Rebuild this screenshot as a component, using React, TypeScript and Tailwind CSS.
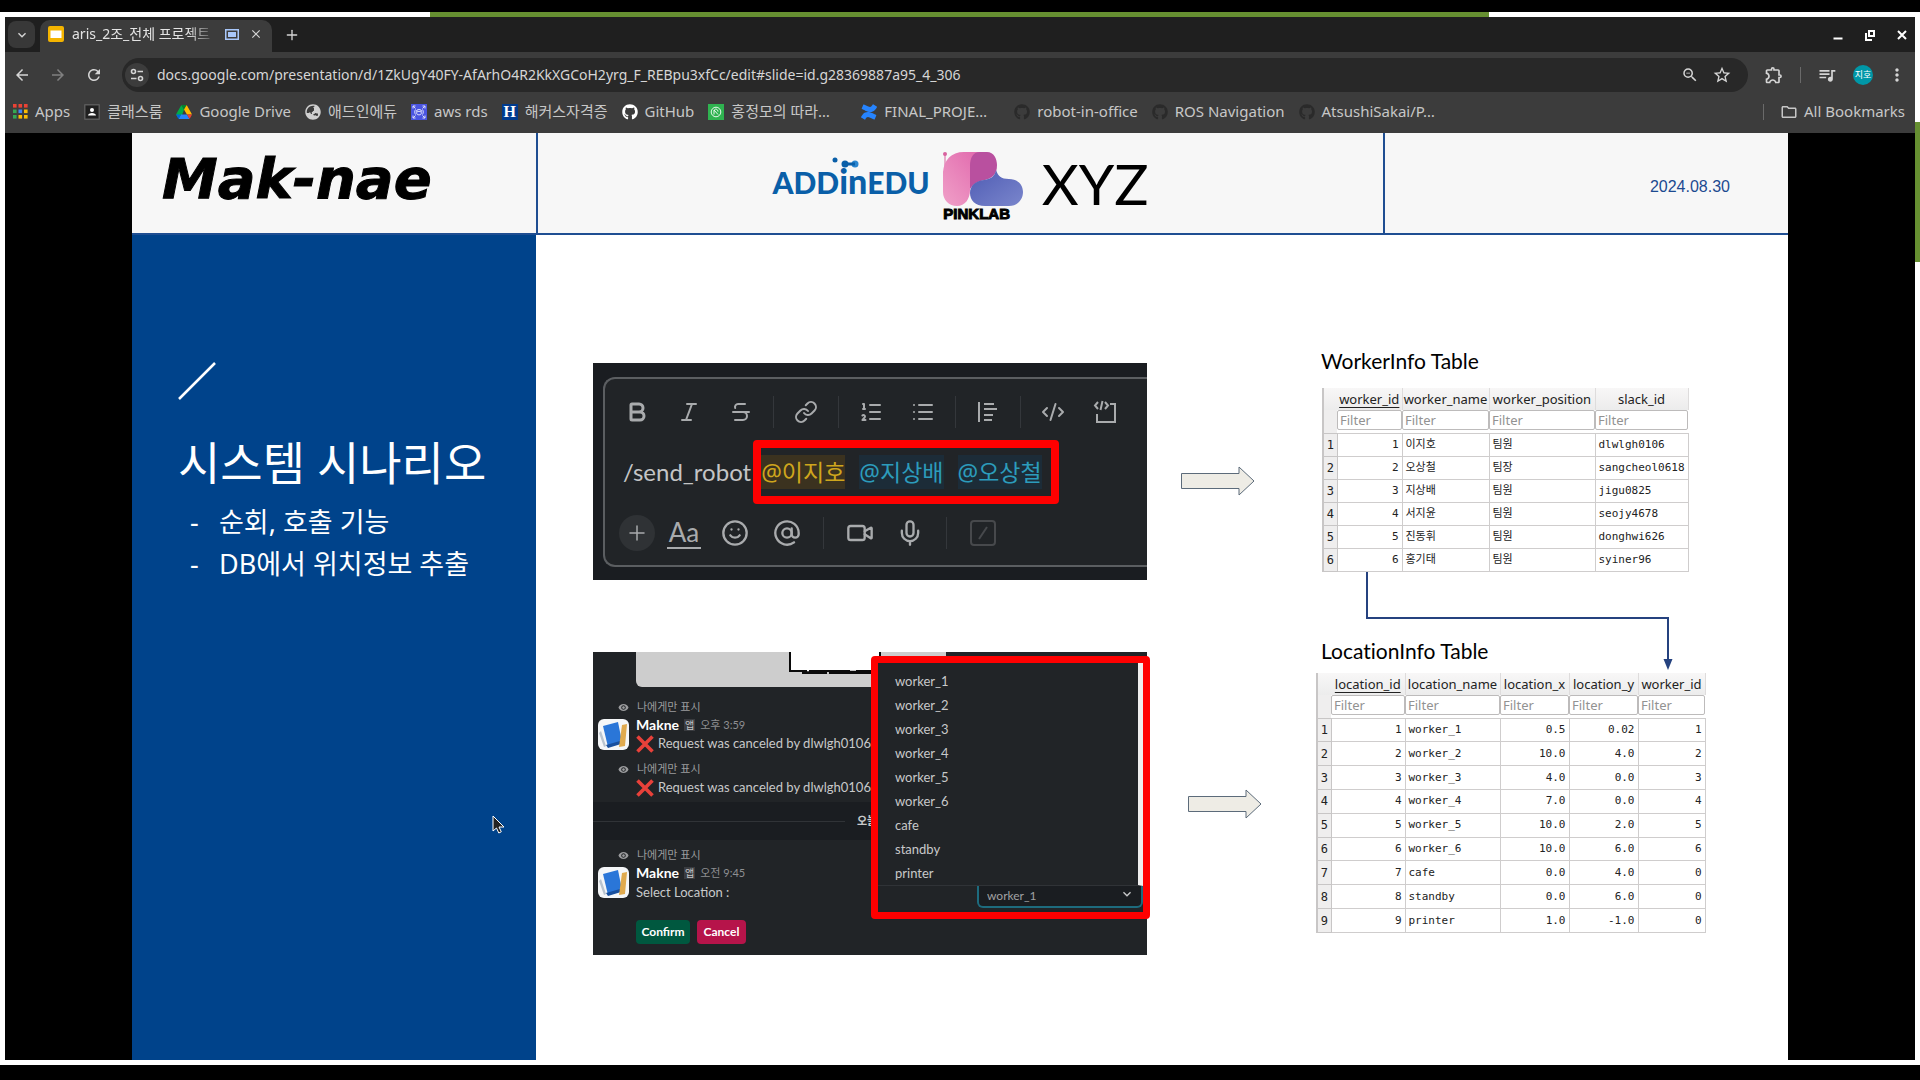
import type { ReactNode } from "react";
import { FaConfluence, FaGithub, FaGlobeAsia } from "react-icons/fa";
import {
  MdArrowBack,
  MdArrowForward,
  MdClose,
  MdExpandMore,
  MdMoreVert,
  MdOutlineExtension,
  MdOutlineFolder,
  MdQueueMusic,
  MdRefresh,
  MdStarBorder,
  MdVisibility,
  MdZoomOut,
} from "react-icons/md";
import { AtSign, Bold, CodeXml, Italic, Link, List, ListOrdered, Mic, Plus, Smile, Strikethrough, Video } from "lucide-react";

const workers = [
  ["1", "이지호", "팀원", "dlwlgh0106"],
  ["2", "오상철", "팀장", "sangcheol0618"],
  ["3", "지상배", "팀원", "jigu0825"],
  ["4", "서지윤", "팀원", "seojy4678"],
  ["5", "진동휘", "팀원", "donghwi626"],
  ["6", "홍기태", "팀원", "syiner96"],
];

const locations = [
  ["1", "worker_1", "0.5", "0.02", "1"],
  ["2", "worker_2", "10.0", "4.0", "2"],
  ["3", "worker_3", "4.0", "0.0", "3"],
  ["4", "worker_4", "7.0", "0.0", "4"],
  ["5", "worker_5", "10.0", "2.0", "5"],
  ["6", "worker_6", "10.0", "6.0", "6"],
  ["7", "cafe", "0.0", "4.0", "0"],
  ["8", "standby", "0.0", "6.0", "0"],
  ["9", "printer", "1.0", "-1.0", "0"],
];

function SlidesIcon() {
  return (
    <svg viewBox="0 0 16 16" className="h-4 w-4 shrink-0">
      <rect width="16" height="16" rx="2" fill="#f4b400" />
      <rect x="2.5" y="4.5" width="11" height="7.5" fill="#fff" />
    </svg>
  );
}

function AppsIcon() {
  const colors = ["#ea4335", "#ea4335", "#ea4335", "#34a853", "#4285f4", "#fbbc04", "#34a853", "#fbbc04", "#fbbc04"];
  return (
    <svg viewBox="0 0 15 15" className="h-[15px] w-[15px]">
      {colors.map((c, i) => (
        <rect key={i} x={(i % 3) * 5.5} y={Math.floor(i / 3) * 5.5} width="3.6" height="3.6" fill={c} />
      ))}
    </svg>
  );
}

function ClassroomIcon() {
  return (
    <svg viewBox="0 0 16 16" className="h-4 w-4">
      <rect width="16" height="16" rx="1" fill="#5a5a5a" />
      <rect x="1.5" y="1.5" width="13" height="13" fill="#202020" />
      <circle cx="8" cy="6" r="2" fill="#fff" />
      <path d="M4 11.5c0-3.4 8-3.4 8 0z" fill="#fff" />
    </svg>
  );
}

function DriveIcon() {
  return (
    <svg viewBox="0 0 87 78" className="h-[14px] w-4">
      <path d="M6.6 66.85 25.3 77 43.65 25 29.9 1.2C28.55 2 27.4 3.1 26.6 4.5L1.2 48.5A9 9 0 0 0 0 53z" fill="#00ac47" />
      <path d="M43.65 25 57.4 1.2C56 .4 54.5 0 52.9 0H34.4c-1.6 0-3.2.45-4.5 1.2z" fill="#00832d" />
      <path d="M43.65 25 57.4 1.2a9 9 0 0 1 3.3 3.3L86.1 48.5a9 9 0 0 1 1.2 4.5H59.8z" fill="#ffba00" />
      <path d="M59.8 53H27.5L13.75 76.8c1.35.8 2.9 1.2 4.5 1.2h50.8c1.6 0 3.15-.45 4.5-1.2z" fill="#2684fc" />
      <path d="M73.55 76.8c1.35-.8 2.5-1.9 3.3-3.3L86.1 57.5a9 9 0 0 0 1.2-4.5H59.8z" fill="#ea4335" />
      <path d="M0 53c0 1.55.4 3.1 1.2 4.5l9.25 16c.8 1.4 1.95 2.5 3.3 3.3L27.5 53z" fill="#0066da" />
    </svg>
  );
}

function RdsIcon() {
  return (
    <svg viewBox="0 0 16 16" className="h-4 w-4" fill="none" stroke="#fff">
      <rect width="16" height="16" fill="#4a55e0" stroke="none" />
      <path d="M2 4.5V2h2.5M11.5 2H14v2.5M14 11.5V14h-2.5M4.5 14H2v-2.5M2.5 2.5l2 2M13.5 2.5l-2 2M2.5 13.5l2-2M13.5 13.5l-2-2" strokeWidth=".8" />
      <ellipse cx="8" cy="6.5" rx="2.2" ry="1" strokeWidth=".8" />
      <path d="M5.8 6.5v3.4c0 1.3 4.4 1.3 4.4 0V6.5M4.5 5.5c-1 1.5-1 3.5 0 5M11.5 5.5c1 1.5 1 3.5 0 5" strokeWidth=".8" />
    </svg>
  );
}

function HackersIcon() {
  return (
    <span className="flex h-4 w-4 items-center justify-center bg-[#003b8e] font-['Liberation_Serif',serif] text-base leading-4 font-bold text-white">
      H
    </span>
  );
}

function GreenIcon() {
  return (
    <svg viewBox="0 0 16 16" className="h-4 w-4" fill="none" stroke="#fff">
      <rect width="16" height="16" fill="#2fb350" stroke="none" />
      <circle cx="8" cy="8" r="4.8" strokeWidth=".9" />
      <path d="M6 10.5V6l4 4.5M6.5 5.5c1.5-1 3.5 0 3.5 2" strokeWidth=".9" />
    </svg>
  );
}

function TuneIcon() {
  return (
    <svg viewBox="0 0 14 14" className="h-[14px] w-[14px]" fill="none" stroke="#d5d5d5" strokeWidth="1.6">
      <circle cx="3.5" cy="3.5" r="2" />
      <path d="M7.5 3.5H13M1 10.5h5.5" />
      <circle cx="10.5" cy="10.5" r="2" />
    </svg>
  );
}

const darkGithub = <FaGithub className="h-4 w-4 text-[#2a2a2a]" />;

const bookmarks: { label: string; icon: ReactNode }[] = [
  { label: "Apps", icon: <AppsIcon /> },
  { label: "클래스룸", icon: <ClassroomIcon /> },
  { label: "Google Drive", icon: <DriveIcon /> },
  { label: "애드인에듀", icon: <FaGlobeAsia className="h-4 w-4 text-[#d0d0d0]" /> },
  { label: "aws rds", icon: <RdsIcon /> },
  { label: "해커스자격증", icon: <HackersIcon /> },
  { label: "GitHub", icon: <FaGithub className="h-4 w-4 text-white" /> },
  { label: "홍정모의 따라…", icon: <GreenIcon /> },
  { label: "FINAL_PROJE…", icon: <FaConfluence className="h-4 w-4 text-[#2684ff]" /> },
  { label: "robot-in-office", icon: darkGithub },
  { label: "ROS Navigation", icon: darkGithub },
  { label: "AtsushiSakai/P…", icon: darkGithub },
];

function TabStrip() {
  return (
    <div className="flex h-[35px] shrink-0 items-center bg-[#1f1f1f] pl-[3px]">
      <button aria-label="Search tabs" className="flex h-[27px] w-[27px] items-center justify-center rounded-lg bg-[#383838]">
        <MdExpandMore className="h-4 w-4" />
      </button>
      <div className="mt-[3px] ml-[5px] flex h-8 w-[232px] items-center rounded-t-[10px] bg-[#3c3c3c] pb-1 pl-2">
        <SlidesIcon />
        <span className="ml-2 w-[145px] mask-r-from-80% text-sm whitespace-nowrap text-[#e3e3e3]">
          aris_2조_전체 프로젝트
        </span>
        <svg viewBox="0 0 14 11" className="ml-2 h-[11px] w-[14px]">
          <rect x=".75" y=".75" width="12.5" height="9.5" fill="none" stroke="#a8c7fa" strokeWidth="1.5" />
          <rect x="3" y="3" width="8" height="5" fill="#a8c7fa" />
        </svg>
        <button aria-label="Close tab" className="ml-[10px]">
          <MdClose className="h-[14px] w-[14px]" />
        </button>
      </div>
      <button aria-label="New tab" className="ml-3">
        <Plus className="h-4 w-4" />
      </button>
      <div className="ml-auto flex items-center gap-5 pr-[7px] text-white">
        <button aria-label="Minimize">
          <svg viewBox="0 0 12 12" className="h-3 w-3">
            <path d="M1.5 9.5h9" stroke="currentColor" strokeWidth="2" />
          </svg>
        </button>
        <button aria-label="Restore">
          <svg viewBox="0 0 12 12" className="h-3 w-3" fill="none" stroke="currentColor" strokeWidth="2">
            <path d="M5 2h5v5H5zM2 4v7h6" />
          </svg>
        </button>
        <button aria-label="Close">
          <svg viewBox="0 0 12 12" className="h-3 w-3" stroke="currentColor" strokeWidth="2">
            <path d="m2 2 8 8M10 2l-8 8" />
          </svg>
        </button>
      </div>
    </div>
  );
}

function Toolbar() {
  return (
    <div className="flex h-[46px] shrink-0 items-center bg-[#3c3c3c]">
      <div className="flex w-[117px] items-center gap-[18px] pl-2">
        <button aria-label="Back">
          <MdArrowBack className="h-[18px] w-[18px]" />
        </button>
        <button aria-label="Forward" className="text-[#808080]">
          <MdArrowForward className="h-[18px] w-[18px]" />
        </button>
        <button aria-label="Reload">
          <MdRefresh className="h-[18px] w-[18px]" />
        </button>
      </div>
      <div className="flex h-[34px] flex-1 items-center rounded-full bg-[#282828] pr-4 pl-[3px]">
        <button aria-label="Site information" className="flex h-6 w-6 items-center justify-center rounded-full bg-[#3c3c3c]">
          <TuneIcon />
        </button>
        <input
          aria-label="Address"
          className="ml-2 flex-1 bg-transparent text-sm text-[#d6d6d6] outline-none"
          defaultValue="docs.google.com/presentation/d/1ZkUgY40FY-AfArhO4R2KkXGCoH2yrg_F_REBpu3xfCc/edit#slide=id.g28369887a95_4_306"
        />
        <button aria-label="Zoom">
          <MdZoomOut className="h-[18px] w-[18px]" />
        </button>
        <button aria-label="Bookmark this page" className="ml-[13px]">
          <MdStarBorder className="h-5 w-5" />
        </button>
      </div>
      <div className="flex items-center pr-2 pl-4">
        <button aria-label="Extensions">
          <MdOutlineExtension className="h-5 w-5" />
        </button>
        <span className="ml-4 h-4 w-px bg-[#6a6a6a]" />
        <button aria-label="Media" className="ml-4">
          <MdQueueMusic className="h-5 w-5" />
        </button>
        <button aria-label="Profile" className="ml-4 h-5 w-5 rounded-full bg-[#0097a7] text-[9px] text-white">
          지호
        </button>
        <button aria-label="Menu" className="ml-[14px]">
          <MdMoreVert className="h-5 w-5" />
        </button>
      </div>
    </div>
  );
}

function BookmarkBar() {
  return (
    <div className="flex h-[35px] shrink-0 items-center gap-[14px] bg-[#3c3c3c] pr-[10px] pb-2 pl-2 text-[15px] whitespace-nowrap text-[#c7c7c7]">
      {bookmarks.map((b) => (
        <a key={b.label} href="#" className="flex items-center gap-[7px]">
          {b.icon}
          {/* long names are cut off at a fixed width */}
          <span className={b.label.endsWith("…") ? "w-[116px]" : ""}>{b.label}</span>
        </a>
      ))}
      <a href="#" className="ml-auto flex items-center">
        <span className="mr-4 h-4 w-px bg-[#6a6a6a]" />
        <MdOutlineFolder className="mr-[6px] h-[18px] w-[18px]" />
        All Bookmarks
      </a>
    </div>
  );
}

function SlideHeader() {
  return (
    <header className="flex h-[102px] shrink-0 border-b-2 border-[#1f4e92] bg-[#f7f7f7]">
      <div className="w-[404px] pt-3 pl-[30px] font-['DejaVu_Sans',sans-serif] text-[56px] leading-[68px] font-bold text-black italic [-webkit-text-stroke:1px_black]">
        Mak-nae
      </div>
      <div className="flex flex-1 justify-center border-x-2 border-[#1f4e92] pt-[17px]">
        <div className="relative pt-[12px] pr-3 font-['Lato',sans-serif] text-[30px] leading-[38px] font-black text-[#0a5fa8]">
          ADD<span className="text-[34px]">in</span>EDU
          <svg viewBox="0 0 30 12" className="absolute top-[7px] left-[60px] h-3 w-[30px]" fill="#0a5fa8">
            <circle cx="3" cy="3" r="2.5" />
            <circle cx="13" cy="7" r="3.5" />
            <circle cx="23" cy="7" r="3.5" fill="#2a86d0" />
            <path d="M13 5.5h10v3H13z" />
          </svg>
        </div>
        <div className="w-[82px]">
          <svg viewBox="0 0 82 56" className="h-14 w-[82px]">
            <defs>
              <linearGradient id="pink" x1="1" y1="0" x2="0" y2="1">
                <stop offset="0" stopColor="#e065ab" />
                <stop offset="1" stopColor="#f0a0c8" />
              </linearGradient>
              <linearGradient id="blue" x1="0" y1="0" x2="1" y2="1">
                <stop offset="0" stopColor="#4f5cb4" />
                <stop offset="1" stopColor="#7a86cc" />
              </linearGradient>
            </defs>
            <path d="M3 4v20" stroke="#d9629f" strokeWidth="1" />
            <circle cx="3" cy="4" r="2" fill="#d9629f" />
            <path d="M1 22C2 10 9 2 22 2h22v24c-8 3-16 5-16 14 0 9-5 16-13 16S1 50 1 42z" fill="url(#pink)" />
            <path d="M38 2h7c7 0 10 7 10 13 0 10-5 13-12 15-7 1-12 4-15 9V16c0-8 3-14 10-14z" fill="#b9509f" />
            <path d="M42 30c7-1 11-4 12-10 2 6 5 9 13 9 9 0 14 6 14 13s-5 14-14 14H43c-10 0-15-6-15-13s5-12 14-13z" fill="url(#blue)" />
          </svg>
          <p className="pr-3 text-center font-['Liberation_Sans',sans-serif] text-[15px] leading-4 font-black text-black [-webkit-text-stroke:1px_black]">
            PINKLAB
          </p>
        </div>
        <p className="pl-[18px] font-['Lato',sans-serif] text-[57px] leading-[66px] text-black">XYZ</p>
      </div>
      <div className="flex w-[403px] items-center justify-end pt-2 pr-[58px] font-['Liberation_Sans',sans-serif] text-base text-[#1c4a90]">
        2024.08.30
      </div>
    </header>
  );
}

function Sidebar() {
  return (
    <aside className="w-[404px] shrink-0 bg-[#00438b] pt-[127px] pl-[46px] text-white">
      <svg viewBox="0 0 38 38" className="h-[38px] w-[38px]" stroke="#fff" strokeWidth="2.5">
        <path d="M1 37 37 1" />
      </svg>
      <h1 className="mt-[28px] text-[46px] leading-[68px] font-normal">시스템 시나리오</h1>
      <ul className="mt-[5px] text-[27px] leading-[42px]">
        {["순회, 호출 기능", "DB에서 위치정보 추출"].map((t) => (
          <li key={t} className="flex">
            <span className="w-[41px] pl-3">-</span>
            {t}
          </li>
        ))}
      </ul>
    </aside>
  );
}

function Divider() {
  return <span className="h-8 w-px bg-[#34373b]" />;
}

function Composer() {
  return (
    <section className="h-[217px] overflow-hidden bg-[#1a1d21] pt-[14px] pl-[10px] text-[#a9abad]">
      <div className="h-[190px] rounded-l-xl border-2 border-r-0 border-[#5b5e61] bg-[#212427]">
        <div className="flex h-[66px] items-center gap-5 pl-5">
          <button aria-label="Bold"><Bold className="h-6 w-6" strokeWidth={3} /></button>
          <button aria-label="Italic" className="ml-2"><Italic className="h-6 w-6" /></button>
          <button aria-label="Strikethrough" className="ml-2"><Strikethrough className="h-6 w-6" /></button>
          <Divider />
          <button aria-label="Link"><Link className="h-6 w-6" /></button>
          <Divider />
          <button aria-label="Ordered list"><ListOrdered className="h-6 w-6" /></button>
          <button aria-label="Bulleted list" className="ml-2"><List className="h-6 w-6" /></button>
          <Divider />
          <button aria-label="Quote">
            <svg viewBox="0 0 24 24" className="h-6 w-6" fill="none" stroke="currentColor" strokeWidth="2">
              <path d="M3 2v20M8 4h10M8 9h13M8 15h9M8 20h8" />
            </svg>
          </button>
          <Divider />
          <button aria-label="Code"><CodeXml className="h-6 w-6" /></button>
          <button aria-label="Code block" className="ml-2">
            <svg viewBox="0 0 24 24" className="h-6 w-6" fill="none" stroke="currentColor" strokeWidth="2">
              <path d="M4 14v8h18V4h-5M5 2 2 5.5 5 9M12 2l3 3.5L12 9M9.5 1l-2 9" />
            </svg>
          </button>
        </div>
        <div className="flex h-[53px] items-center pl-[18px] text-[23px] leading-[34px] whitespace-nowrap">
          <span className="font-['Lato',sans-serif] text-[24px] text-[#c4c5c6]">/send_robot</span>
          <div className="ml-0.5 flex h-16 items-center gap-[14px] rounded-sm border-8 border-[#ff0000] pr-[9px]">
            <a href="#" className="bg-[#3b321f] text-[#cfa61d]">@이지호</a>
            <a href="#" className="bg-[#1c2c38] text-[#2c9cbc]">@지상배</a>
            <a href="#" className="bg-[#1c2c38] text-[#2c9cbc]">@오상철</a>
          </div>
        </div>
        <div className="flex h-[69px] items-center pl-[14px]">
          <button aria-label="Attach" className="flex h-9 w-9 items-center justify-center rounded-full bg-[#2f3235]">
            <Plus className="h-6 w-6" strokeWidth={1.5} />
          </button>
          <button aria-label="Formatting" className="ml-3 w-[34px] border-b-2 border-[#a9abad] font-['Lato',sans-serif] text-[26px] leading-[30px]">
            Aa
          </button>
          <button aria-label="Emoji" className="ml-5"><Smile className="h-7 w-7" /></button>
          <button aria-label="Mention" className="ml-6"><AtSign className="h-7 w-7" /></button>
          <span className="mx-[22px]"><span className="block h-8 w-px bg-[#34373b]" /></span>
          <button aria-label="Video"><Video className="h-7 w-7" /></button>
          <button aria-label="Microphone" className="ml-[22px]"><Mic className="h-7 w-7" /></button>
          <span className="mx-[22px]"><span className="block h-8 w-px bg-[#34373b]" /></span>
          <button aria-label="Shortcuts" className="text-[#47494c]">
            <svg viewBox="0 0 28 28" className="h-7 w-7" fill="none" stroke="currentColor" strokeWidth="2">
              <rect x="2" y="2" width="24" height="24" rx="3" />
              <path d="m18 8-8 12" />
            </svg>
          </button>
        </div>
      </div>
    </section>
  );
}

function Avatar() {
  return (
    <svg viewBox="0 0 31 31" className="mt-[3px] h-[31px] w-[31px]">
      <rect width="31" height="31" rx="6" fill="#f4f6f8" />
      <path d="M3 12 8 27l-2 1L1 14z" fill="#b9c4cf" />
      <path d="m5 7 15-4 4 20-14 5z" fill="#2a76d8" />
      <path d="m8 26 14-4 1 3-13 4z" fill="#174f9e" />
      <path d="m24 6 5-1-2 22-6 1z" fill="#e0aa4e" />
    </svg>
  );
}

function OnlyMe() {
  return (
    <div className="flex h-[18px] items-center pl-[25px] text-[11px] text-[#9a9b9d]">
      <MdVisibility className="mr-2 h-[11px] w-[11px]" />
      나에게만 표시
    </div>
  );
}

function Canceled() {
  return (
    <p className="flex h-5 items-center whitespace-nowrap">
      <svg viewBox="0 0 18 18" className="mr-1 h-[18px] w-[18px]" stroke="#e8413a" strokeWidth="3.6">
        <path d="M1.5 1.5l15 15M16.5 1.5l-15 15" />
      </svg>
      Request was canceled by dlwlgh0106
    </p>
  );
}

function Author({ time }: { time: string }) {
  return (
    <div className="flex h-[18px] items-center text-[11px] text-[#8e8f92]">
      <b className="text-sm leading-[18px] text-white">Makne</b>
      <span className="mx-[5px] bg-[#3a3c40] px-px text-[10px] leading-3 text-[#c4c5c6]">앱</span>
      <span>{time}</span>
    </div>
  );
}

function Chat() {
  const options = ["worker_1", "worker_2", "worker_3", "worker_4", "worker_5", "worker_6", "cafe", "standby", "printer"];
  return (
    <section className="relative h-[303px] bg-[#212427] font-['Lato','Noto_Sans_CJK_KR',sans-serif] text-[13px] text-[#c8c9ca]">
      <div className="ml-[43px] flex h-[35px] w-[310px] rounded-bl-md bg-[#cdcdcd]">
        <svg viewBox="0 0 310 35" className="h-[35px] w-[310px]">
          <path d="M154 0h90v19h-90z" fill="#fff" />
          <path d="M154 0v19h90V0" fill="none" stroke="#0a0a0a" strokeWidth="2" />
          <path d="M166 20.5h76" stroke="#0a0a0a" strokeWidth="3" />
          <path d="M171 18.5h2M191 21h2M214 18h6" stroke="#fff" strokeWidth="1.5" />
        </svg>
      </div>
      <div className="mt-[11px]">
        <OnlyMe />
        <div className="flex gap-[7px] pl-[5px]">
          <Avatar />
          <div>
            <Author time="오후 3:59" />
            <Canceled />
          </div>
        </div>
        <div className="mt-[6px]">
          <OnlyMe />
        </div>
        <div className="pl-[43px]">
          <Canceled />
        </div>
      </div>
      <div className="mt-1 flex h-[38px] items-center gap-3 bg-[#1a1d21] text-[11px] font-bold">
        <span className="h-px w-[252px] bg-[#303337]" />
        오늘
      </div>
      <div className="mt-[6px]">
        <OnlyMe />
        <div className="flex gap-[7px] pl-[5px]">
          <Avatar />
          <div>
            <Author time="오전 9:45" />
            <p className="h-5 leading-5">Select Location :</p>
          </div>
        </div>
        <div className="mt-[18px] flex gap-[7px] pl-[43px] text-xs font-bold text-white">
          <button className="h-6 w-[54px] rounded bg-[#00583f]">Confirm</button>
          <button className="h-6 w-[49px] rounded bg-[#b6144a]">Cancel</button>
        </div>
      </div>

      {/* open location menu, lies over the chat */}
      <div className="absolute top-1 -right-[3px] h-[263px] w-[279px] rounded-sm border-[7px] border-[#ff0000] bg-[#212427]">
        <ul role="listbox" aria-label="Location" className="h-[223px] border-r-[5px] border-b border-r-[#f0eeee] border-b-[#303337] pt-[6px] pl-[17px] leading-6">
          {options.map((o) => (
            <li key={o} role="option" aria-selected={o === "worker_1"}>
              {o}
            </li>
          ))}
        </ul>
        <div className="relative ml-[99px]">
          <select
            aria-label="Select Location"
            className="block h-[22px] w-full appearance-none rounded-b-md border-2 border-t-0 border-[#1d6b7e] bg-[#1a1d21] pl-2 text-xs text-[#a0a1a3]"
          >
            {options.map((o) => (
              <option key={o}>{o}</option>
            ))}
          </select>
          <MdExpandMore className="pointer-events-none absolute top-0 right-2 h-4 w-4" />
        </div>
      </div>
    </section>
  );
}

function Arrow() {
  return (
    <svg viewBox="0 0 74 30" className="h-[30px] w-[74px]" fill="#eeece5" stroke="#5c6b7a">
      <path d="M.5 7.5H58V1l15 14-15 14v-6.5H.5z" />
    </svg>
  );
}

type Column = { name: string; width: string; right?: boolean };

function DataTable({ columns, rows, className }: { columns: Column[]; rows: string[][]; className: string }) {
  return (
    <table className={"table-fixed border-collapse text-[#222] " + className}>
      <colgroup>
        <col className="w-[14px]" />
        {columns.map((c) => (
          <col key={c.name} className={c.width} />
        ))}
      </colgroup>
      <thead>
        <tr className="h-[22px] bg-gradient-to-b from-[#f8f7f7] to-[#ececec] text-[13px]">
          <th className="border-l-2 border-[#c8c6c6]" />
          {columns.map((c, i) => (
            <th key={c.name} className="border-r border-[#dedcdc] p-0 text-center leading-4 font-normal whitespace-nowrap">
              <span className={i === 0 ? "underline underline-offset-3" : ""}>{c.name}</span>
            </th>
          ))}
        </tr>
        <tr className="h-[23px]">
          <th className="border-l-2 border-[#c8c6c6] bg-[#efeeee]" />
          {columns.map((c) => (
            <th key={c.name} className="p-0 align-top">
              <input
                aria-label={"Filter " + c.name}
                placeholder="Filter"
                className="block h-5 w-full rounded-xs border border-[#bdbbbb] bg-white px-0.5 text-[13px] font-normal placeholder:text-[#929292]"
              />
            </th>
          ))}
        </tr>
      </thead>
      <tbody className="font-['DejaVu_Sans_Mono','Noto_Sans_CJK_KR',monospace] text-[11px]">
        {rows.map((row) => (
          <tr key={row[0]}>
            <th className="border-y border-r border-l-2 border-[#c8c6c6] bg-[#efeeee] p-0 text-center text-xs leading-4 font-normal">{row[0]}</th>
            {row.map((cell, i) => (
              <td
                key={i}
                className={"border border-[#cfcdcd] px-[3px] py-0 leading-4 whitespace-nowrap " + (columns[i].right ? "text-right" : "text-left")}
              >
                {cell}
              </td>
            ))}
          </tr>
        ))}
      </tbody>
    </table>
  );
}

export default function App() {
  return (
    <div className="flex h-screen flex-col bg-black font-['Noto_Sans','Noto_Sans_CJK_KR',sans-serif] text-[#d5d5d5]">
      <div className="relative mt-3 mb-[15px] flex min-h-0 flex-1 flex-col bg-white p-[5px]">
        {/* accents of the page behind the browser window */}
        <div className="absolute top-0 left-[430px] h-[5px] w-[1059px] bg-[#668f31]" />
        <div className="absolute top-[110px] right-0 h-[140px] w-[5px] bg-[#668f31]" />

        <TabStrip />
        <Toolbar />
        <BookmarkBar />

        <div className="flex min-h-0 flex-1 bg-black px-[127px]">
          <div className="flex min-w-0 flex-1 flex-col bg-white">
            <SlideHeader />
            <div className="flex min-h-0 flex-1">
              <Sidebar />
              <main className="relative flex min-w-0 flex-1 pl-[57px] text-black">
                <div className="flex w-[554px] shrink-0 flex-col gap-[72px] pt-[128px]">
                  <Composer />
                  <Chat />
                </div>
                <div className="ml-[34px] flex w-[81px] shrink-0 flex-col gap-[293px] pt-[231px]">
                  <Arrow />
                  <div className="flex justify-end">
                    <Arrow />
                  </div>
                </div>
                <div className="relative ml-[54px] shrink-0 pt-[114px]">
                  <h2 className="pl-[5px] font-['Lato',sans-serif] text-[21px] leading-6 [font-variant-ligatures:none]">WorkerInfo Table</h2>
                  <DataTable
                    className="mt-[15px] ml-[6px] h-[184px] w-[365px]"
                    rows={workers}
                    columns={[
                      { name: "worker_id", width: "w-[65px]", right: true },
                      { name: "worker_name", width: "w-[87px]" },
                      { name: "worker_position", width: "w-[106px]" },
                      { name: "slack_id", width: "w-[93px]" },
                    ]}
                  />
                  <h2 className="mt-[67px] pl-[5px] font-['Lato',sans-serif] text-[21px] leading-6 [font-variant-ligatures:none]">LocationInfo Table</h2>
                  <DataTable
                    className="mt-[10px] h-[260px] w-[388px]"
                    rows={locations}
                    columns={[
                      { name: "location_id", width: "w-[74px]", right: true },
                      { name: "location_name", width: "w-[95px]" },
                      { name: "location_x", width: "w-[69px]", right: true },
                      { name: "location_y", width: "w-[69px]", right: true },
                      { name: "worker_id", width: "w-[67px]", right: true },
                    ]}
                  />
                  {/* foreign key connector */}
                  <svg viewBox="0 0 312 100" className="absolute top-[337px] left-[46px] h-[100px] w-[312px]">
                    <path d="M5 0v46h301v44" fill="none" stroke="#25427f" strokeWidth="2" />
                    <path d="M301.5 87h9L306 98z" fill="#25427f" />
                  </svg>
                </div>
                {/* mouse pointer */}
                <svg viewBox="0 0 14 20" className="absolute top-[580px] -left-[44px] h-5 w-[14px]">
                  <path d="M1 1v15l3.5-3 2.3 5 2.5-1.2L7 12h5z" fill="#222" stroke="#fff" />
                </svg>
              </main>
            </div>
          </div>
        </div>
      </div>
    </div>
  );
}
